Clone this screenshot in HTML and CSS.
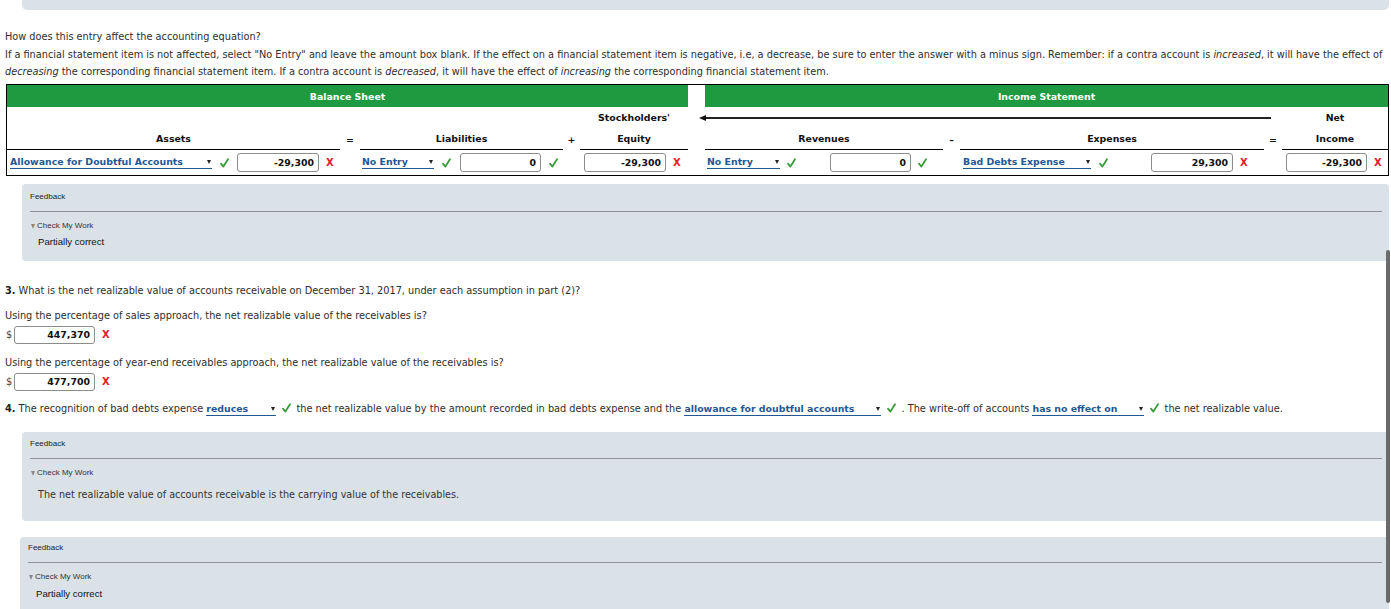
FILE: index.html
```html
<!DOCTYPE html>
<html lang="en">
<head>
<meta charset="utf-8">
<title>Accounting equation</title>
<link rel="stylesheet" href="styles.css">
</head>
<body>
<div class="prev-fb"></div>
<p class="lead">How does this entry affect the accounting equation?</p>
<p class="instr">If a financial statement item is not affected, select "No Entry" and leave the amount box blank. If the effect on a financial statement item is negative, i.e, a decrease, be sure to enter the answer with a minus sign. Remember: if a contra account is <i>increased</i>, it will have the effect of <i>decreasing</i> the corresponding financial statement item. If a contra account is <i>decreased</i>, it will have the effect of <i>increasing</i> the corresponding financial statement item.</p>

<div class="sheet">
  <div class="band band-bs">Balance Sheet</div>
  <div class="band-gap"></div>
  <div class="band band-is">Income Statement</div>

  <div class="hd r2 col5">Stockholders'</div>
  <div class="arrow"><span class="arrow-head"></span><span class="arrow-line"></span></div>
  <div class="hd r2 col11">Net</div>

  <div class="hd r3 ul">Assets</div>
  <div class="hd r3">=</div>
  <div class="hd r3 ul">Liabilities</div>
  <div class="hd r3">+</div>
  <div class="hd r3 ul">Equity</div>
  <div class="hd r3"></div>
  <div class="hd r3 ul">Revenues</div>
  <div class="hd r3">–</div>
  <div class="hd r3 ul">Expenses</div>
  <div class="hd r3">=</div>
  <div class="hd r3 ul">Income</div>

  <div class="cell r4 d-assets"><span class="sel">Allowance for Doubtful Accounts<span class="caret"></span></span><svg class="ok" viewBox="0 0 9 10"><path d="M1 5.6 L3.4 8.6 L8 1.2"/></svg><span class="amt">-29,300</span><span class="bad">X</span></div>
  <div class="cell r4"></div>
  <div class="cell r4 d-liab"><span class="sel">No Entry<span class="caret"></span></span><svg class="ok" viewBox="0 0 9 10"><path d="M1 5.6 L3.4 8.6 L8 1.2"/></svg><span class="amt">0</span><svg class="ok ok-after" viewBox="0 0 9 10"><path d="M1 5.6 L3.4 8.6 L8 1.2"/></svg></div>
  <div class="cell r4"></div>
  <div class="cell r4 d-eq"><span class="amt">-29,300</span><span class="bad">X</span></div>
  <div class="cell r4"></div>
  <div class="cell r4 d-rev"><span class="sel">No Entry<span class="caret"></span></span><svg class="ok" viewBox="0 0 9 10"><path d="M1 5.6 L3.4 8.6 L8 1.2"/></svg><span class="amt">0</span><svg class="ok ok-after" viewBox="0 0 9 10"><path d="M1 5.6 L3.4 8.6 L8 1.2"/></svg></div>
  <div class="cell r4"></div>
  <div class="cell r4 d-exp"><span class="sel">Bad Debts Expense<span class="caret"></span></span><svg class="ok" viewBox="0 0 9 10"><path d="M1 5.6 L3.4 8.6 L8 1.2"/></svg><span class="amt">29,300</span><span class="bad">X</span></div>
  <div class="cell r4"></div>
  <div class="cell r4 d-net"><span class="amt">-29,300</span><span class="bad">X</span></div>
</div>

<div class="fb fb-1">
  <div class="fb-title">Feedback</div>
  <div class="fb-check"><span class="tri"></span>Check My Work</div>
  <div class="fb-body">Partially correct</div>
</div>

<p class="q q3"><b>3.</b> What is the net realizable value of accounts receivable on December 31, 2017, under each assumption in part (2)?</p>
<p class="q q3-a">Using the percentage of sales approach, the net realizable value of the receivables is?</p>
<div class="dollar-row"><span class="dollar">$</span><span class="amt amt-wide">447,370</span><span class="bad">X</span></div>
<p class="q q3-b">Using the percentage of year-end receivables approach, the net realizable value of the receivables is?</p>
<div class="dollar-row"><span class="dollar">$</span><span class="amt amt-wide">477,700</span><span class="bad">X</span></div>

<p class="q q4"><b>4.</b> The recognition of bad debts expense <span class="sel sel-in s-reduces">reduces<span class="caret"></span></span><svg class="ok ok-in" viewBox="0 0 9 10"><path d="M1 5.6 L3.4 8.6 L8 1.2"/></svg> the net realizable value by the amount recorded in bad debts expense and the <span class="sel sel-in s-allow">allowance for doubtful accounts<span class="caret"></span></span><svg class="ok ok-in" viewBox="0 0 9 10"><path d="M1 5.6 L3.4 8.6 L8 1.2"/></svg> . The write-off of accounts <span class="sel sel-in s-noeff">has no effect on<span class="caret"></span></span><svg class="ok ok-in" viewBox="0 0 9 10"><path d="M1 5.6 L3.4 8.6 L8 1.2"/></svg> the net realizable value.</p>

<div class="fb fb-2">
  <div class="fb-title">Feedback</div>
  <div class="fb-check"><span class="tri"></span>Check My Work</div>
  <div class="fb-body fb-text">The net realizable value of accounts receivable is the carrying value of the receivables.</div>
</div>

<div class="fb fb-3">
  <div class="fb-title">Feedback</div>
  <div class="fb-check"><span class="tri"></span>Check My Work</div>
  <div class="fb-body">Partially correct</div>
</div>

<div class="scroll-thumb"></div>
</body>
</html>
```

FILE: styles.css
```css
html, body {
  background: #fff;
}
body {
  margin: 0;
  padding: 0 2px 0 5px;
  font-family: "DejaVu Sans", Verdana, sans-serif;
  font-size: 9.75px;
  color: #2e2e2e;
  height: 609px;
  overflow: hidden;
  position: relative;
}

.prev-fb {
  margin-left: 17px;
  height: 10px;
  background: #dae2e8;
  border-radius: 0 0 5px 5px;
}

.lead {
  margin: 18px 0 0;
  line-height: 17.5px;
}
.instr {
  margin: 0;
  line-height: 17.5px;
}

/* ---------- accounting equation sheet ---------- */
.sheet {
  margin: 3.5px 0 0 1px;
  border: 1px solid #000;
  display: grid;
  grid-template-columns: 333px 20px 203px 17px 108px 17px 238px 17px 304px 18px 106px;
  grid-template-rows: 22px 21px 22px 25px;
  font-size: 9.4px;
  font-weight: bold;
  color: #111;
}
.band {
  grid-row: 1;
  background: #1f9a40;
  color: #fff;
  display: flex;
  align-items: center;
  justify-content: center;
}
.band-bs { grid-column: 1 / 6; }
.band-gap { grid-row: 1; grid-column: 6; }
.band-is { grid-column: 7 / 12; }

.hd {
  display: flex;
  align-items: center;
  justify-content: center;
}
.r2 { grid-row: 2; }
.r3 { grid-row: 3; }
.r4 { grid-row: 4; }
.col5 { grid-column: 5; }
.col11 { grid-column: 11; }
.ul { border-bottom: 1px solid #000; }

.arrow {
  grid-row: 2;
  grid-column: 6 / 11;
  margin: 0 11px;
  display: flex;
  align-items: center;
}
.arrow-head {
  width: 0;
  height: 0;
  border-top: 3px solid transparent;
  border-bottom: 3px solid transparent;
  border-right: 7px solid #111;
}
.arrow-line {
  flex: 1;
  height: 2px;
  background: #222;
}

.cell {
  display: flex;
  align-items: center;
}

/* dropdown */
.sel {
  display: inline-flex;
  align-items: center;
  justify-content: space-between;
  color: #1f5896;
  font-weight: bold;
  font-size: 9.4px;
  border-bottom: 1px solid #1f5896;
  line-height: 12px;
  box-sizing: border-box;
}
.caret {
  width: 0;
  height: 0;
  border-left: 2.5px solid transparent;
  border-right: 2.5px solid transparent;
  border-top: 4px solid #222;
  margin-right: 1px;
}

/* check mark */
.ok {
  width: 9px;
  height: 10px;
  margin-left: 8px;
  flex: none;
}
.ok path {
  fill: none;
  stroke: #3b9b3b;
  stroke-width: 1.8;
  stroke-linecap: round;
  stroke-linejoin: round;
}
.ok-after { margin-left: 8px; }

/* amount box */
.amt {
  box-sizing: border-box;
  width: 82px;
  height: 19px;
  border: 1px solid #8c8c8c;
  border-radius: 3px;
  background: #fff;
  display: inline-flex;
  align-items: center;
  justify-content: flex-end;
  padding-right: 4px;
  font-size: 9.4px;
  font-weight: bold;
  color: #111;
  margin-left: 8px;
  flex: none;
}
.bad {
  color: #e4231f;
  font-weight: bold;
  font-size: 10px;
  margin-left: 7px;
}

.d-assets { padding-left: 3px; }
.d-assets .sel { width: 202px; }

.d-liab { padding-left: 2px; }
.d-liab .sel { width: 72px; }
.d-liab .amt { width: 81px; margin-left: 9px; }

.d-eq .amt { margin-left: 4px; }

.d-rev { padding-left: 2px; }
.d-rev .sel { width: 73px; }
.d-rev .ok { margin-left: 7px; }
.d-rev .amt { width: 81px; margin-left: 34px; }

.d-exp { padding-left: 3px; }
.d-exp .sel { width: 128px; }
.d-exp .amt { margin-left: 43px; }

.d-net .amt { width: 81px; margin-left: 4px; }

/* ---------- feedback boxes ---------- */
.fb {
  background: #dae2e8;
  border-radius: 4px;
  padding: 6px 7px 11px 8px;
  font-family: "Liberation Sans", Arial, sans-serif;
  color: #222;
}
.fb-title {
  font-size: 8px;
  line-height: 14px;
  padding-bottom: 7px;
  border-bottom: 1px solid #8d9296;
}
.fb-check {
  font-size: 8px;
  line-height: 14px;
  margin-top: 7px;
  display: flex;
  align-items: center;
  color: #333;
}
.tri {
  width: 0;
  height: 0;
  border-left: 2.5px solid transparent;
  border-right: 2.5px solid transparent;
  border-top: 5px solid #8a8a8a;
  margin: 0 2px 0 1px;
}
.fb-body {
  margin-top: 1px;
  line-height: 16px;
  font-size: 9.6px;
  padding-left: 8px;
  color: #111;
}
.fb-1 { margin: 8px 0 0 17px; }
.fb-2 {
  margin: 14.5px 0 0 17px;
  padding-top: 5px;
  padding-bottom: 18px;
}
.fb-2 .fb-body { margin-top: 7px; }
.fb-text {
  font-family: "DejaVu Sans", Verdana, sans-serif;
  font-size: 9.65px;
  color: #333;
}
.fb-3 {
  margin: 16px 0 0 15px;
  padding-top: 4px;
}
.fb-3 .fb-body { margin-top: 2px; }

/* ---------- questions ---------- */
.q {
  margin: 0;
  line-height: 17.5px;
}
.q b { color: #222; }
.q3 { margin-top: 21px; }
.q3-a { margin-top: 7.5px; }
.q3-b { margin-top: 10px; }
.q4 { margin-top: 9px; }

.dollar-row {
  display: flex;
  align-items: center;
  height: 19px;
  margin-top: 0.5px;
}
.dollar {
  width: 8px;
  padding-left: 1px;
  color: #444;
}
.amt-wide {
  width: 81px;
  height: 18px;
  margin-left: 0;
}

.sel-in {
  vertical-align: baseline;
  line-height: 12px;
}
.s-reduces { width: 70px; }
.s-allow { width: 197px; }
.s-noeff { width: 112px; }
.ok-in {
  margin: 0 2px 0 6px;
  vertical-align: -1px;
}

.scroll-thumb {
  position: absolute;
  left: 1386px;
  top: 250px;
  width: 4px;
  height: 353px;
  background: #6a6a6a;
  border-radius: 2px;
}
```
